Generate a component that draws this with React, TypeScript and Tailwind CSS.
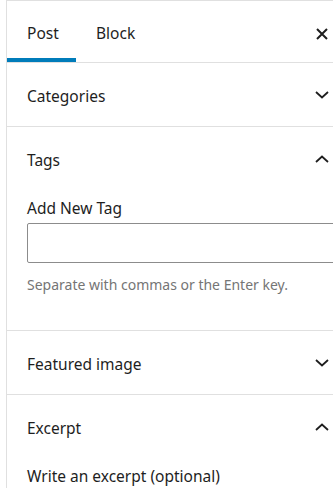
import React from "react";

const ChevronDown = () => (
  <svg width="14" height="8" viewBox="0 0 14 8" fill="none">
    <polyline points="1,1 7,6.5 13,1" stroke="#1e1e1e" strokeWidth="1.8" />
  </svg>
);

const ChevronUp = () => (
  <svg width="14" height="8" viewBox="0 0 14 8" fill="none">
    <polyline points="1,7 7,1.5 13,7" stroke="#1e1e1e" strokeWidth="1.8" />
  </svg>
);

function PanelHeader({ title, open }: { title: string; open?: boolean }) {
  return (
    <div className="flex h-[63px] items-center justify-between pl-5 pr-5">
      <span className="pt-[4px] text-[15.5px] text-[#1e1e1e]">{title}</span>
      <span className="flex h-[30px] w-[30px] items-center justify-center">
        {open ? <ChevronUp /> : <ChevronDown />}
      </span>
    </div>
  );
}

export default function App() {
  return (
    <div
      className="h-[492px] w-[333px] overflow-hidden bg-white"
      style={{ fontFamily: '"Noto Sans", "Open Sans", sans-serif' }}
    >
      <div className="ml-[6px] w-[351px] border-l border-t border-[#e0e0e0]">
        {/* Tabs */}
        <div className="flex items-center border-b border-[#e0e0e0]">
          <button className="h-[61px] w-[69px] border-b-4 border-[#007cba] pl-5 pt-[9px] text-left text-[15.5px] text-[#1e1e1e]">
            Post
          </button>
          <button className="h-[61px] border-b-4 border-transparent px-5 pt-[9px] text-[15.5px] text-[#1e1e1e]">
            Block
          </button>
          <button className="ml-auto mr-5 mt-[4px] flex h-[30px] w-[30px] items-center justify-center">
            <svg width="12" height="12" viewBox="0 0 12 12">
              <path d="M1 1 L11 11 M11 1 L1 11" stroke="#1e1e1e" strokeWidth="2" />
            </svg>
          </button>
        </div>

        {/* Categories */}
        <div className="border-b border-[#e0e0e0]">
          <PanelHeader title="Categories" />
        </div>

        {/* Tags */}
        <div className="border-b border-[#e0e0e0] pb-[35px]">
          <PanelHeader title="Tags" open />
          <div className="px-5 pt-[6px]">
            <label className="block h-[24px] text-[15.5px] leading-[24px] text-[#1e1e1e]">
              Add New Tag
            </label>
            <input
              type="text"
              className="mt-[3px] block h-[40px] w-full rounded-[2px] border border-[#8c8c8c] outline-none"
            />
            <p className="mt-3 text-[14px] leading-[20px] text-[#757575]">
              Separate with commas or the Enter key.
            </p>
          </div>
        </div>

        {/* Featured image */}
        <div className="border-b border-[#e0e0e0]">
          <PanelHeader title="Featured image" />
        </div>

        {/* Excerpt */}
        <div>
          <PanelHeader title="Excerpt" open />
          <div className="px-5 pt-[6px]">
            <label className="block text-[15.5px] leading-[24px] text-[#1e1e1e]">
              Write an excerpt (optional)
            </label>
          </div>
        </div>
      </div>
    </div>
  );
}
